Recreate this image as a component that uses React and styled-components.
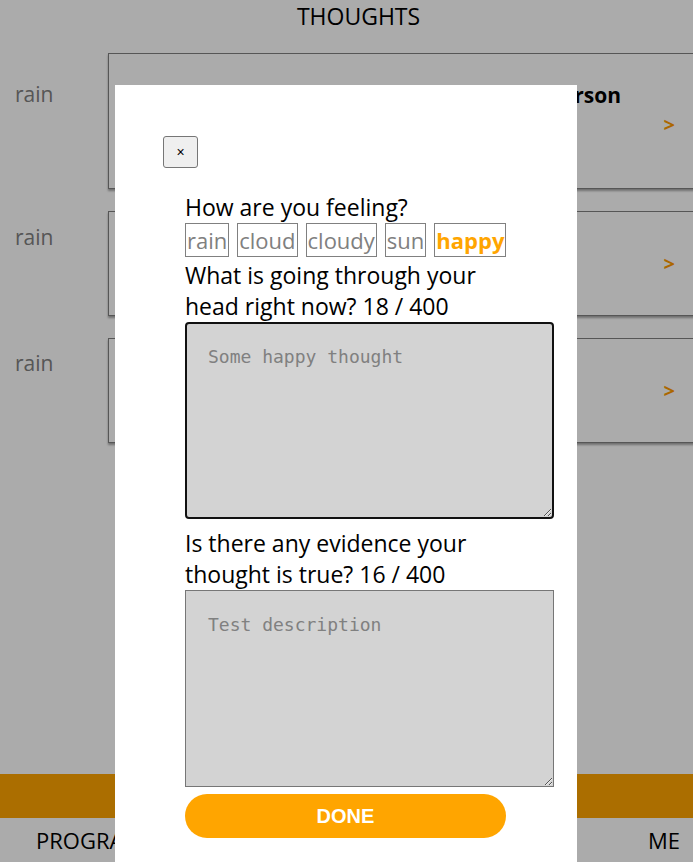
import { useState } from 'react';
import styled, { createGlobalStyle } from 'styled-components';

const GlobalStyle = createGlobalStyle`
  html, body {
    margin: 0;
    padding: 0;
    overflow: hidden;
  }
  body {
    font-family: 'Open Sans', 'Noto Sans', sans-serif;
    background: #fff;
  }
`;

const Page = styled.div`
  height: 100vh;
  display: flex;
  flex-direction: column;
  overflow: hidden;
`;

const Title = styled.h1`
  margin: 0;
  height: 53px;
  padding: 1px 0 0 24px;
  box-sizing: border-box;
  text-align: center;
  font-size: 23px;
  font-weight: 400;
  line-height: 30px;
  color: #000;
`;

const List = styled.div`
  flex: 1;
  display: flex;
  flex-direction: column;
  gap: 22px;
`;

const Row = styled.div`
  display: grid;
  grid-template-columns: 108px 620px;
`;

const Mood = styled.span`
  padding: ${(p) => p.$offset}px 0 0 15px;
  font-size: 21px;
  line-height: 28px;
  color: #808080;
`;

const Card = styled.div`
  height: ${(p) => p.$height}px;
  box-sizing: border-box;
  border: 1px solid #808080;
  box-shadow: 0 2px 2px rgba(0, 0, 0, 0.35);
  display: flex;
  flex-direction: column;
  align-items: flex-end;
  justify-content: center;
  gap: 6px;
  padding-right: 52px;
`;

const CardTitle = styled.div`
  font-weight: 700;
  font-size: 21px;
  margin-top: -24px;
  margin-bottom: -4px;
  margin-right: 54px;
`;

const Arrow = styled.span`
  color: #ff9a00;
  font-weight: 700;
  font-size: 20px;
`;

const OrangeBar = styled.div`
  height: 44px;
  background: orange;
`;

const Nav = styled.nav`
  height: 44px;
  display: flex;
  justify-content: space-between;
  align-items: center;
  padding: 0 13px 0 36px;
  font-size: 22px;
  color: #000;
`;

const Overlay = styled.div`
  position: fixed;
  inset: 0;
  background: rgba(0, 0, 0, 0.33);
  display: flex;
  justify-content: center;
  padding: 85px 1px 0 0;
`;

const Modal = styled.div`
  width: 462px;
  height: 900px;
  background: #fff;
  box-sizing: border-box;
  padding: 51px 0 0 48px;
`;

const CloseButton = styled.button`
  width: 35px;
  height: 32px;
  padding: 0;
  background: #efefef;
  border: 1px solid #767676;
  border-radius: 3px;
  font-family: 'Liberation Sans', Arial, sans-serif;
  font-size: 14px;
  color: #000;
`;

const Form = styled.form`
  margin: 24px 0 0 22px;
  width: 369px;
  display: flex;
  flex-direction: column;
  font-size: 23px;
  line-height: 31px;
  color: #000;
`;

const Label = styled.label`
  display: block;
  width: 310px;
`;

const Moods = styled.div`
  display: flex;
  gap: 8px;
  margin-bottom: 3px;
`;

const MoodOption = styled.span`
  height: 34px;
  box-sizing: border-box;
  border: 1px solid #808080;
  padding: 0 1px;
  line-height: 32px;
  font-size: 22px;
  cursor: pointer;
  color: ${(p) => (p.$selected ? 'orange' : '#808080')};
  font-weight: ${(p) => (p.$selected ? 700 : 400)};
`;

const TextArea = styled.textarea`
  display: block;
  width: 369px;
  height: 197px;
  box-sizing: border-box;
  margin: 0 0 ${(p) => p.$gap || 0}px;
  background: #d3d3d3;
  border: ${(p) => (p.$active ? '2px solid #111' : '1px solid #767676')};
  border-radius: ${(p) => (p.$active ? '4px' : '0')};
  padding: ${(p) => (p.$active ? '21px' : '22px')};
  font-family: 'DejaVu Sans Mono', 'Liberation Mono', monospace;
  font-size: 18px;
  line-height: 24px;
  color: #808080;
  outline: none;
`;

const DoneButton = styled.button`
  margin-top: 7px;
  width: 321px;
  height: 44px;
  border: none;
  border-radius: 22px;
  background: orange;
  color: #fff;
  font-family: 'Liberation Sans', Arial, sans-serif;
  font-weight: 700;
  font-size: 20px;
`;

const moods = ['rain', 'cloud', 'cloudy', 'sun', 'happy'];

const thoughts = [
  { mood: 'rain', height: 136, offset: 27, title: 'Thought about a person' },
  { mood: 'rain', height: 105, offset: 12 },
  { mood: 'rain', height: 105, offset: 11 },
];

function App() {
  const [selected, setSelected] = useState('happy');
  const [thought, setThought] = useState('Some happy thought');
  const [evidence, setEvidence] = useState('Test description');

  return (
    <>
      <GlobalStyle />
      <Page>
        <Title>THOUGHTS</Title>
        <List>
          {thoughts.map((t, i) => (
            <Row key={i}>
              <Mood $offset={t.offset}>{t.mood}</Mood>
              <Card $height={t.height}>
                {t.title && <CardTitle>{t.title}</CardTitle>}
                <Arrow>&gt;</Arrow>
              </Card>
            </Row>
          ))}
        </List>
        <OrangeBar />
        <Nav>
          <span>PROGRAMS</span>
          <span>THOUGHTS</span>
          <span>ME</span>
        </Nav>
      </Page>
      <Overlay>
        <Modal>
          <CloseButton type="button">×</CloseButton>
          <Form onSubmit={(e) => e.preventDefault()}>
            <Label>How are you feeling?</Label>
            <Moods>
              {moods.map((m) => (
                <MoodOption key={m} $selected={m === selected} onClick={() => setSelected(m)}>
                  {m}
                </MoodOption>
              ))}
            </Moods>
            <Label>{`What is going through your head right now? ${thought.length} / 400`}</Label>
            <TextArea $active $gap={9} value={thought} onChange={(e) => setThought(e.target.value)} />
            <Label>{`Is there any evidence your thought is true? ${evidence.length} / 400`}</Label>
            <TextArea value={evidence} onChange={(e) => setEvidence(e.target.value)} />
            <DoneButton type="submit">DONE</DoneButton>
          </Form>
        </Modal>
      </Overlay>
    </>
  );
}

export default App;
